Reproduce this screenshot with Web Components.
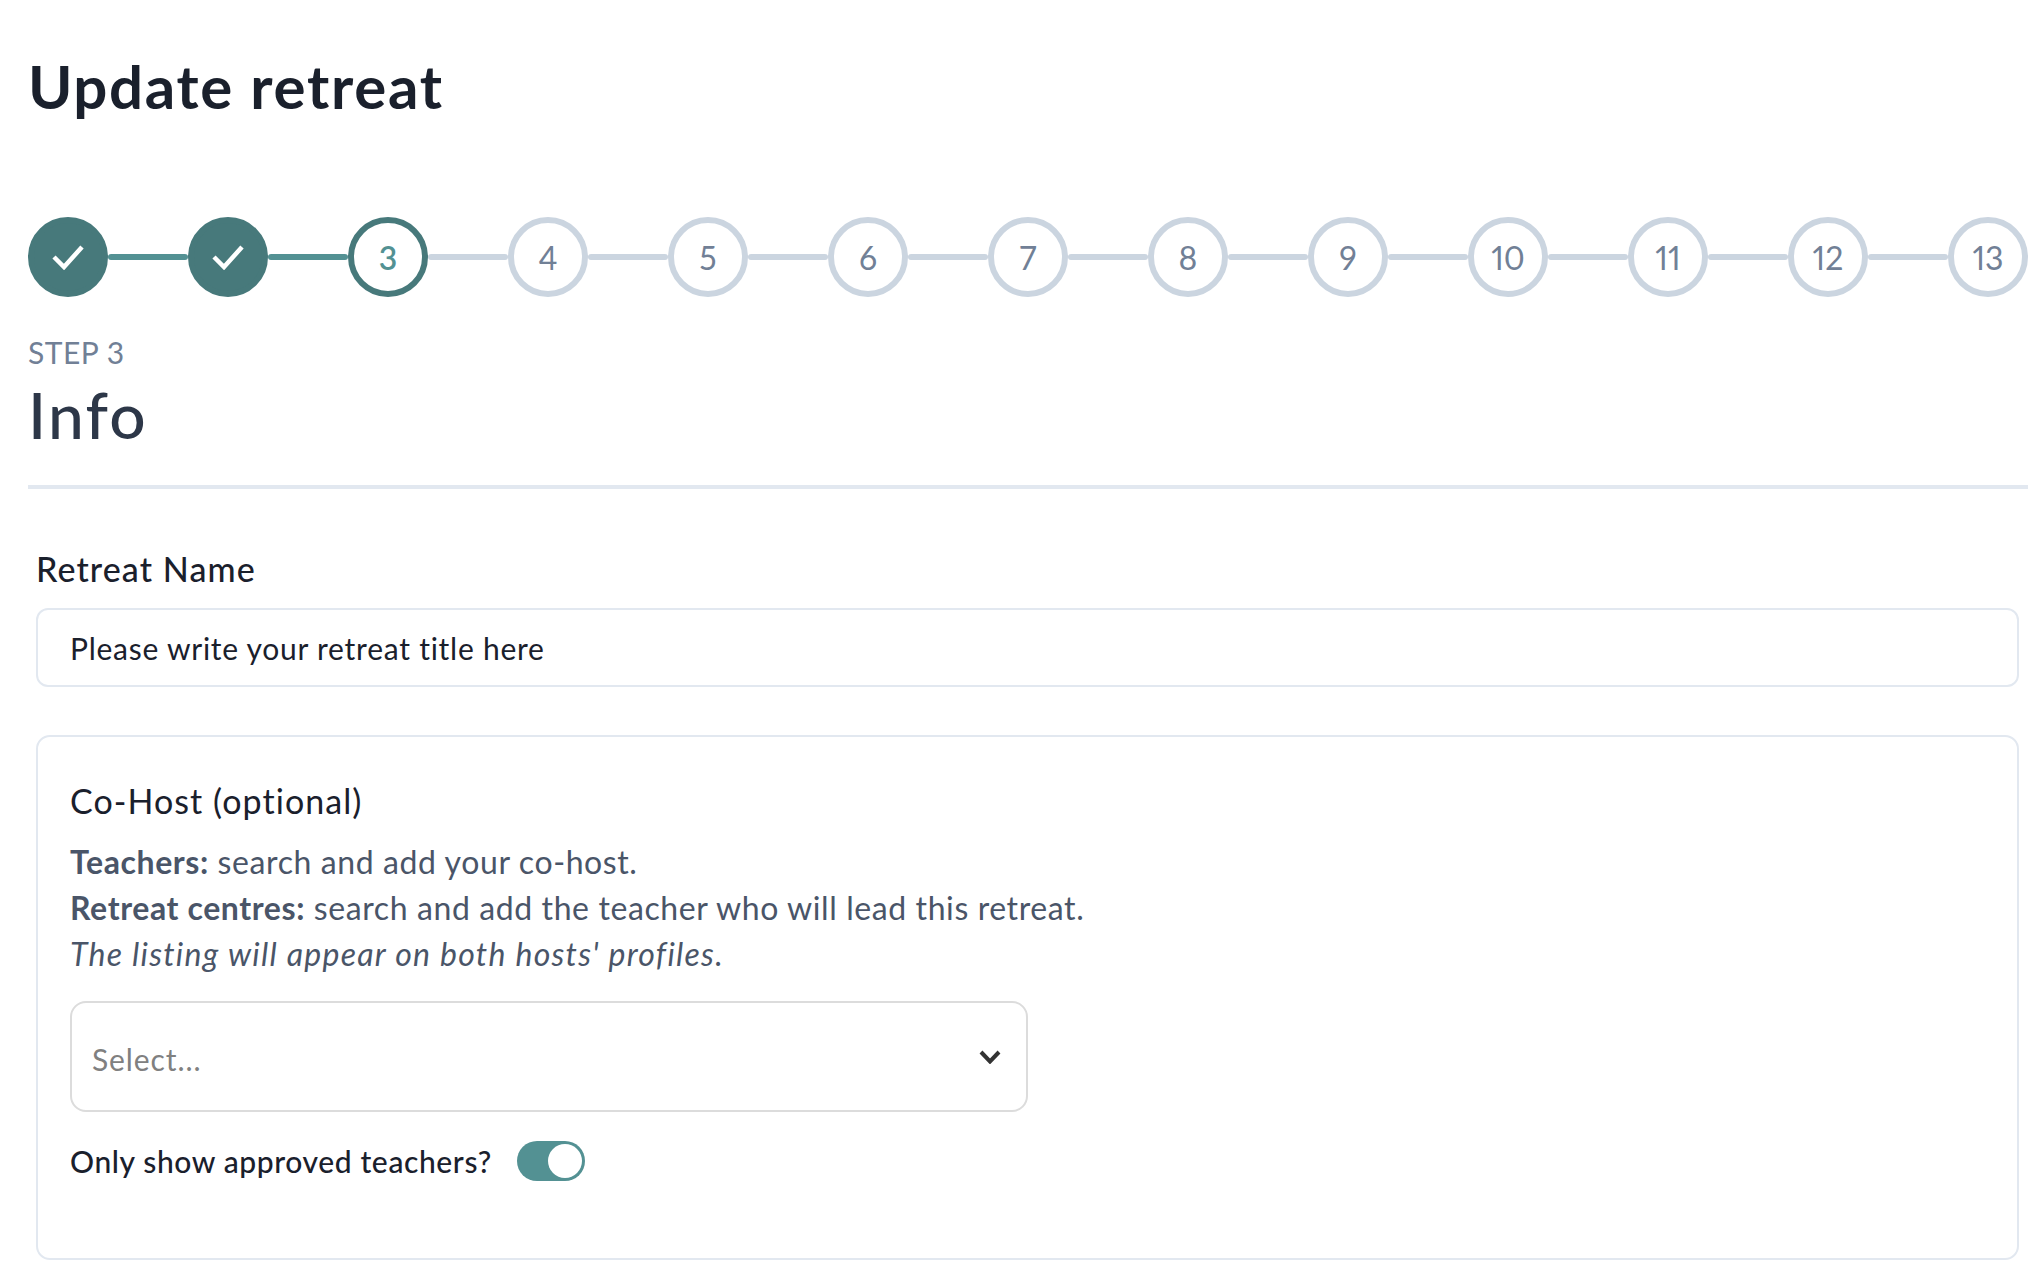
<!DOCTYPE html>
<html>
<head>
<meta charset="utf-8">
<title>Update retreat</title>
<style>
  html, body { margin: 0; background: #fff; }
  body { font-family: Lato, "Noto Sans", sans-serif; color: #1a202c; overflow: hidden; }
  form-card b { font-weight: 700; }
</style>
</head>
<body>
<retreat-page>
  <progress-steps current="3" total="13"></progress-steps>
  <step-heading step="STEP 3" title="Info"></step-heading>
  <text-field label="Retreat Name" value="Please write your retreat title here"></text-field>
  <form-card heading="Co-Host (optional)">
    <div><b>Teachers:</b> search and add your co-host.</div>
    <div><b>Retreat centres:</b> search and add the teacher who will lead this retreat.</div>
    <div style="letter-spacing:1.27px"><i>The listing will appear on both hosts' profiles.</i></div>
    <select-box slot="after" placeholder="Select..."></select-box>
    <toggle-row slot="after" label="Only show approved teachers?"></toggle-row>
  </form-card>
</retreat-page>

<script>
class RetreatPage extends HTMLElement {
  constructor() {
    super();
    this.attachShadow({mode: 'open'}).innerHTML = `
      <style>
        :host { display: block; padding: 0 14px 0 28px; height: 1266px; box-sizing: border-box; overflow: hidden; }
        h1 { margin: 0; padding-top: 50px; height: 217px; box-sizing: border-box; font-size: 60px; line-height: 72px; font-weight: 700; color: #1a202c; letter-spacing: 1.7px; }
      </style>
      <h1>Update retreat</h1>
      <slot></slot>
    `;
  }
}

class ProgressSteps extends HTMLElement {
  constructor() {
    super();
    this._shadowRoot = this.attachShadow({mode: 'open'});
  }
  connectedCallback() {
    let current = Number(this.getAttribute('current'));
    let total = Number(this.getAttribute('total'));
    let check = `<svg width="34" height="26" viewBox="0 0 34 26"><path d="M3 13 L13 23 L31 3" fill="none" stroke="#fff" stroke-width="4.5"/></svg>`;
    let html = '';
    for (let i = 1; i <= total; i++) {
      let state = i < current ? 'done' : (i == current ? 'now' : '');
      html += `<div class="dot ${state}">${i < current ? check : i}</div>`;
      if (i < total) html += `<div class="line ${i < current ? 'on' : ''}"></div>`;
    }
    this._shadowRoot.innerHTML = `
      <style>
        :host { display: flex; align-items: center; height: 80px; }
        .dot { flex: none; width: 80px; height: 80px; box-sizing: border-box; border: 6px solid #cbd5e0; border-radius: 50%;
               display: flex; align-items: center; justify-content: center; font-size: 32px; color: #718096; font-variant-numeric: proportional-nums; }
        .dot.done { background: #47797b; border-color: #47797b; }
        .dot.now { border-color: #47797b; color: #539193; font-weight: 600; }
        .line { flex: 1; height: 6px; border-radius: 3px; background: #cbd5e0; }
        .line.on { background: #539193; }
      </style>
      ${html}
    `;
  }
}

class StepHeading extends HTMLElement {
  constructor() {
    super();
    this.attachShadow({mode: 'open'}).innerHTML = `
      <style>
        :host { display: block; padding-top: 37px; height: 192px; box-sizing: border-box; border-bottom: 4px solid #e2e8f0; }
        .step { font-size: 30px; line-height: 36px; color: #718096; letter-spacing: 0.5px; }
        .title { font-size: 64px; line-height: 76px; font-weight: 500; color: #2d3748; margin-top: 7px; letter-spacing: 2.2px; }
      </style>
      <div class="step">${this.getAttribute('step')}</div>
      <div class="title">${this.getAttribute('title')}</div>
    `;
  }
}

class TextField extends HTMLElement {
  constructor() {
    super();
    this.attachShadow({mode: 'open'}).innerHTML = `
      <style>
        :host { display: block; margin: 0 9px 0 8px; padding-top: 60px; }
        label { display: block; font-size: 34px; line-height: 40px; font-weight: 500; color: #1a202c; height: 59px; letter-spacing: 1.1px; }
        .box { height: 79px; box-sizing: border-box; border: 2px solid #e2e8f0; border-radius: 12px; padding: 0 32px;
               display: flex; align-items: center; font-size: 30px; color: #1a202c; letter-spacing: 0.75px; }
      </style>
      <label>${this.getAttribute('label')}</label>
      <div class="box">${this.getAttribute('value')}</div>
    `;
  }
}

class FormCard extends HTMLElement {
  constructor() {
    super();
    this.attachShadow({mode: 'open'}).innerHTML = `
      <style>
        :host { display: block; margin: 48px 9px 0 8px; height: 525px; box-sizing: border-box; border: 2px solid #e2e8f0; border-radius: 14px; padding: 42px 32px 0; }
        h3 { margin: 0 0 16px; font-size: 34px; line-height: 44px; font-weight: 400; color: #1a202c; letter-spacing: 1.06px; }
        .notes { font-size: 32px; line-height: 46px; color: #4a5568; letter-spacing: 0.6px; }
      </style>
      <h3>${this.getAttribute('heading')}</h3>
      <div class="notes"><slot></slot></div>
      <slot name="after"></slot>
    `;
  }
}

class SelectBox extends HTMLElement {
  constructor() {
    super();
    this.attachShadow({mode: 'open'}).innerHTML = `
      <style>
        :host { display: flex; align-items: center; justify-content: space-between; width: 958px; height: 111px; box-sizing: border-box;
                margin-top: 24px; border: 2px solid #dcdcdc; border-radius: 16px; padding: 4px 25px 0 20px; font-size: 30px; color: #808080; letter-spacing: 0.9px; }
        svg { display: block; margin-top: -4px; }
      </style>
      <span>${this.getAttribute('placeholder')}</span>
      <svg width="22" height="14" viewBox="0 0 22 14"><path d="M2 2 L11 11.5 L20 2" fill="none" stroke="#333" stroke-width="4"/></svg>
    `;
  }
}

class ToggleRow extends HTMLElement {
  constructor() {
    super();
    this.attachShadow({mode: 'open'}).innerHTML = `
      <style>
        :host { display: flex; align-items: center; margin-top: 29px; height: 40px; font-size: 30px; font-weight: 500; color: #1a202c; letter-spacing: 0.62px; }
        .track { margin-left: 25px; width: 68px; height: 40px; border-radius: 20px; background: #539193; position: relative; }
        .knob { position: absolute; right: 3px; top: 3px; width: 34px; height: 34px; border-radius: 50%; background: #fff; }
      </style>
      <span>${this.getAttribute('label')}</span>
      <div class="track"><div class="knob"></div></div>
    `;
  }
}

customElements.define('retreat-page', RetreatPage);
customElements.define('progress-steps', ProgressSteps);
customElements.define('step-heading', StepHeading);
customElements.define('text-field', TextField);
customElements.define('form-card', FormCard);
customElements.define('select-box', SelectBox);
customElements.define('toggle-row', ToggleRow);
</script>
</body>
</html>
